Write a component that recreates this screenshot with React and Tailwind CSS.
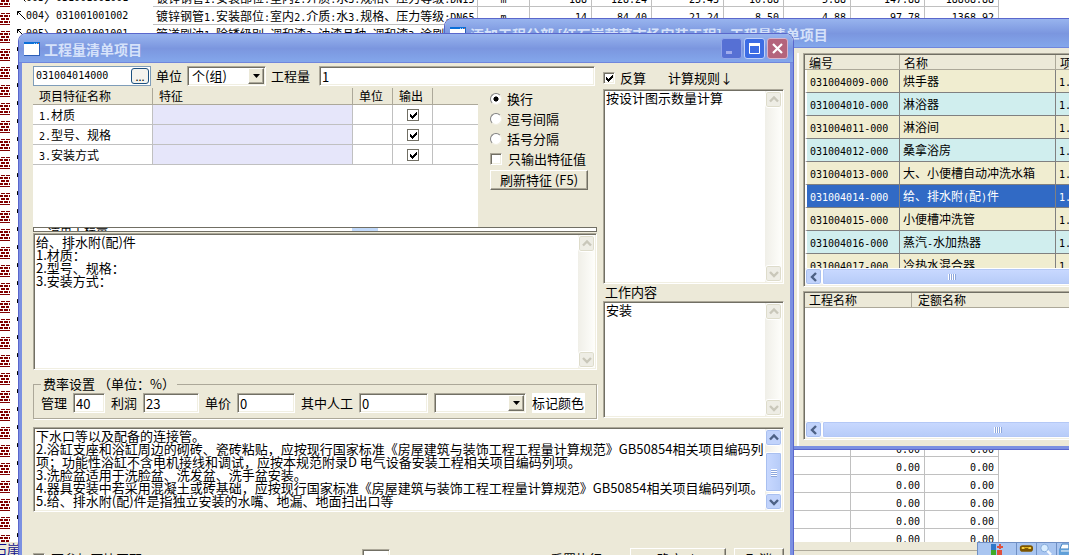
import React, { useState } from "react";

const sunken =
  "border border-t-[#aca899] border-l-[#aca899] border-r-white border-b-white bg-white shadow-[inset_1px_1px_0_#716f64,inset_-1px_-1px_0_#f1efe2]";
const raised =
  "border border-t-white border-l-white border-r-[#716f64] border-b-[#716f64] bg-[#ece9d8] shadow-[inset_-1px_-1px_0_#aca899]";
const titleBar =
  "flex h-[29px] shrink-0 items-center bg-linear-to-b from-[#98b4ee] via-[#7b96df] to-[#84a8ec] shadow-[inset_0_-1px_0_#7086dc]";

const billRows = [
  ["003", "031001001001", "镀锌钢管1.安装部位:室内2.介质:水3.规格、压力等级:DN15", "m", "188", "128.24", "25.43", "10.88", "5.88", "147.88", "18868.88"],
  ["004", "031001001002", "镀锌钢管1.安装部位:室内2.介质:水3.规格、压力等级:DN65", "m", "14", "84.40", "21.24", "8.50", "4.88", "97.78", "1368.92"],
  ["005", "031001001001", "管道刷油1.除锈级别:调和漆2.油漆品种:调和漆3.涂刷", "m", "0", "0.00", "0.00", "0.00", "0.00", "0.00", "0.00"],
];
const emptyRow = ["", "", "", "", "", "", "", "", "", "0.00", "0.00"];
const allRows = [...billRows, ...Array(28).fill(emptyRow)];

const features = ["1.材质", "2.型号、规格", "3.安装方式"];

const items = [
  ["031004009-000", "烘手器"],
  ["031004010-000", "淋浴器"],
  ["031004011-000", "淋浴间"],
  ["031004012-000", "桑拿浴房"],
  ["031004013-000", "大、小便槽自动冲洗水箱"],
  ["031004014-000", "给、排水附(配)件"],
  ["031004015-000", "小便槽冲洗管"],
  ["031004016-000", "蒸汽-水加热器"],
  ["031004017-000", "冷热水混合器"],
];

const notes = `下水口等以及配备的连接管。
2.浴缸支座和浴缸周边的砌砖、瓷砖粘贴，应按现行国家标准《房屋建筑与装饰工程工程量计算规范》GB50854相关项目编码列
项；功能性浴缸不含电机接线和调试，应按本规范附录D 电气设备安装工程相关项目编码列项。
3.洗脸盆适用于洗脸盆、洗发盆、洗手盆安装。
4.器具安装中若采用混凝土或砖基础，应按现行国家标准《房屋建筑与装饰工程工程量计算规范》GB50854相关项目编码列项。
5.给、排水附(配)件是指独立安装的水嘴、地漏、地面扫出口等`;

// Latin parts use a narrow monospace so that they keep half the width of a Chinese character
function Mixed({ text }) {
  return text.split(/([\x20-\x7e]+)/).map((part, i) =>
    i % 2 ? (
      <span key={i} className="font-['DejaVu_Sans_Mono',monospace] text-[10px] leading-none whitespace-pre">
        {part}
      </span>
    ) : (
      part
    )
  );
}

function BrickIcon() {
  return (
    <svg width="10" height="12" viewBox="0 0 10 12" shapeRendering="crispEdges" className="shrink-0">
      <path
        fill="#800000"
        d="M1 0h4v1H1zM6 0h4v1H6zM0 2h3v2H0zM4 2h4v2H4zM9 2h1v2H9zM1 5h4v2H1zM6 5h3v2H6zM0 8h3v2H0zM4 8h4v2H4zM9 8h1v2H9zM0 11h10v1H0z"
      />
    </svg>
  );
}

function WindowIcon() {
  return (
    <svg width="16" height="14" viewBox="0 0 16 14" shapeRendering="crispEdges" className="shrink-0">
      <rect width="16" height="14" fill="#2c5fb8" />
      <rect width="16" height="3" fill="#0a6fd8" />
      <rect y="2" width="15" height="11" fill="#fff" />
      <rect x="10" y="1" width="1" height="1" fill="#9fd0ff" />
      <rect x="12" y="1" width="1" height="1" fill="#9fd0ff" />
      <rect x="14" y="1" width="1" height="1" fill="#f06030" />
    </svg>
  );
}

function Chevron({ dir, color }) {
  const paths = {
    up: "M1 6.5 5 2.5 9 6.5",
    down: "M1 3 5 7 9 3",
    left: "M7 1 3 5 7 9",
  };
  return (
    <svg width="10" height="10" viewBox="0 0 10 10" fill="none" stroke={color} strokeWidth="2.4">
      <path d={paths[dir]} />
    </svg>
  );
}

function ScrollButton({ dir, disabled }) {
  return (
    <button
      type="button"
      aria-label={dir}
      disabled={disabled}
      className={
        disabled
          ? "flex size-[17px] shrink-0 items-center justify-center rounded-[3px] border border-white bg-[#eeede5] shadow-[inset_0_0_0_1px_#dedccb]"
          : "flex size-[17px] shrink-0 items-center justify-center rounded-[3px] border border-white bg-[#c1d3fb] shadow-[inset_0_0_0_1px_#a9c0f0]"
      }
    >
      <Chevron dir={dir} color={disabled ? "#c9c7ba" : "#4d6185"} />
    </button>
  );
}

function VScroll({ disabled = true, children }) {
  return (
    <div className="flex w-[17px] shrink-0 flex-col bg-linear-to-r from-[#f0efe8] to-[#fefefb]">
      <ScrollButton dir="up" disabled={disabled} />
      <div className="flex flex-1 flex-col justify-end">{children}</div>
      <ScrollButton dir="down" disabled={disabled} />
    </div>
  );
}

function HScroll({ thumb }) {
  return (
    <div className="flex h-[17px] shrink-0 bg-[#f5f4ee]">
      <ScrollButton dir="left" />
      <div
        className={`${thumb} flex shrink-0 items-center justify-center gap-px rounded-xs border border-white bg-linear-to-b from-[#c9d9ff] to-[#b6cbf8] shadow-[inset_0_0_0_1px_#b4c8f6]`}
      >
        {[0, 1, 2, 3].map((n) => (
          <span key={n} className="h-1.5 w-px bg-white shadow-[1px_0_0_#8ca6dc]" />
        ))}
      </div>
    </div>
  );
}

function TextPane({ label, value, className, children }) {
  return (
    <div className={`${sunken} ${className} flex p-px`}>
      <textarea
        aria-label={label}
        defaultValue={value}
        spellCheck="false"
        wrap="off"
        className="min-w-0 flex-1 resize-none overflow-hidden pl-px text-[13px] leading-[13px] whitespace-pre outline-none"
      />
      {children || <VScroll />}
    </div>
  );
}

function CheckBox({ id, checked, flat, label }) {
  const [on, setOn] = useState(checked);
  return (
    <span className="relative flex size-3 shrink-0">
      <input
        id={id}
        type="checkbox"
        aria-label={label}
        checked={on}
        onChange={() => setOn(!on)}
        className={flat ? "size-3 appearance-none border border-[#716f64] bg-white" : `${sunken} size-3 appearance-none`}
      />
      {on && (
        <svg viewBox="0 0 12 12" className="pointer-events-none absolute inset-0 size-3" shapeRendering="crispEdges">
          <path d="M3 5h1v1h1v1h1V6h1V5h1V4h1V3h1v3H9v1H8v1H7v1H6v1H5V9H4V8H3z" />
        </svg>
      )}
    </span>
  );
}

function Radio({ label, checked }) {
  return (
    <label className="flex items-center gap-[5px]">
      <input
        type="radio"
        name="separator"
        defaultChecked={checked}
        className="size-3 appearance-none rounded-full border border-t-[#808080] border-r-[#f1efe2] border-b-[#f1efe2] border-l-[#808080] bg-white checked:bg-radial checked:from-black checked:from-30% checked:to-white checked:to-40%"
      />
      {label}
    </label>
  );
}

function Select({ id, label, options, className }) {
  return (
    <span className={`relative flex h-5 ${className}`}>
      <select id={id} aria-label={label} className={`${sunken} w-full appearance-none pl-1 outline-none`}>
        {options.map((o) => (
          <option key={o}>{o}</option>
        ))}
      </select>
      <span className={`${raised} pointer-events-none absolute inset-y-0.5 right-0.5 flex w-4 items-center justify-center`}>
        <svg width="7" height="4" viewBox="0 0 7 4">
          <path d="M0 0h7L3.5 4z" />
        </svg>
      </span>
    </span>
  );
}

function RateField({ id, label, value, width }) {
  return (
    <>
      <label htmlFor={id} className="shrink-0">
        {label}
      </label>
      <input id={id} defaultValue={value} className={`${sunken} ${width} h-5 min-w-0 pl-0.5 outline-none`} />
    </>
  );
}

function BillSheet() {
  return (
    <div className="min-h-0 flex-1 overflow-hidden text-xs leading-[17px]">
      <table className="-mt-[11px] w-[999px] table-fixed border-separate border-spacing-0">
        <colgroup>
          <col className="w-[153px]" />
          <col className="w-[325px]" />
          <col className="w-[52px]" />
          <col className="w-[62px]" />
          <col className="w-[60px]" />
          <col className="w-[72px]" />
          <col className="w-[60px]" />
          <col className="w-[67px]" />
          <col className="w-[74px]" />
          <col className="w-[74px]" />
        </colgroup>
        <tbody>
          {allRows.map(([no, code, name, unit, ...nums], i) => (
            <tr key={i} className="h-[18px]">
              <td className="p-0">
                <div className="flex h-[18px] items-center">
                  <div className="self-end">
                    <BrickIcon />
                  </div>
                  <svg width="9" height="10" viewBox="0 0 9 10" className="ml-[7px]" fill="none" stroke="#000">
                    <path d="M.5 4V.5H4M.5.5l8 8" />
                  </svg>
                  {no && (
                    <span className="flex items-center whitespace-pre">
                      <Mixed text={no} />
                      <span className="w-3">〉</span>
                      <Mixed text={code} />
                    </span>
                  )}
                </div>
              </td>
              <td className="overflow-hidden border-r border-b border-[#c0c0c0] p-0 pl-[3px] whitespace-nowrap">
                <Mixed text={name} />
              </td>
              <td className="border-r border-b border-[#c0c0c0] p-0 text-center">
                <Mixed text={unit} />
              </td>
              {nums.map((n, j) => (
                <td key={j} className="border-r border-b border-[#c0c0c0] p-0 pr-1 text-right">
                  <Mixed text={n} />
                </td>
              ))}
            </tr>
          ))}
        </tbody>
      </table>
    </div>
  );
}

function StatusStrip() {
  return (
    <div className="flex h-[13px] shrink-0 overflow-hidden bg-[#ece9d8]">
      <span className="-ml-1.5 text-[13px] leading-[13px] text-[#10108c]">石崖</span>
      <div className="mt-2 flex-1 border-t border-[#aca899]" />
      <div className="flex w-[92px] items-start divide-x divide-[#6f8fc4] border-t border-l border-[#6f8fc4] bg-[#a9c5f0]">
        <svg width="39" height="12" viewBox="0 0 39 12" shapeRendering="crispEdges">
          <path fill="#2f78c8" d="M13 1h6v6h-6z" />
          <path fill="#3faa28" d="M13 7h6v5h-6z" />
          <path fill="#e0503c" d="M20 7h5v5h-5zM20 3h6v2h-6zM22 1h2v5h-2z" />
        </svg>
        <svg width="21" height="12" viewBox="0 0 21 12">
          <rect x="3" y="2" width="14" height="7" rx="3" fill="#7c5400" />
          <path d="M5 5h3M12 5h3" stroke="#f8d040" strokeWidth="2" />
          <path d="M8 4.500h4" stroke="#f0c020" />
        </svg>
        <svg width="20" height="12" viewBox="0 0 20 12">
          <circle cx="8" cy="5" r="4" fill="#d8ecff" stroke="#7fa6d8" />
          <path d="m11 8 4 4" stroke="#f4f8ff" strokeWidth="2.500" />
        </svg>
        <svg width="12" height="12" viewBox="0 0 12 12">
          <path d="M5 1h7v5H3z" fill="#fff" stroke="#3d7fc0" />
          <path d="M2 6h10v6H2z" fill="#5f9fd8" />
          <path d="M4 8h8" stroke="#fff" />
        </svg>
      </div>
    </div>
  );
}

function PickerWindow() {
  return (
    <section className="absolute top-[18px] -right-[140px] left-[444px] flex h-[432px] flex-col overflow-hidden rounded-t-lg border border-[#5a67cc] bg-[#ece9d8]">
      <header className={`${titleBar} gap-1 pl-[5px]`}>
        <WindowIcon />
        <h2 className="flex gap-2 text-sm font-bold text-[#d6e2fa]">
          <span>添加工程分部 [红石崖蔬菜市场安装工程]</span>
          <span>工程量清单项目</span>
        </h2>
      </header>
      <div className="flex min-h-0 flex-1 border-x-[3px] border-b-[3px] border-[#7b90e2] pt-[5px]">
        <div className="flex w-[351px] shrink-0 flex-col gap-6 border-r-2 border-white pr-1 pb-1">
          <div className="flex-1 border-2 border-[#aca899] bg-white" />
          <div className="h-5 border border-[#716f64] bg-white" />
        </div>
        <div className="ml-1 flex min-w-0 flex-1 flex-col gap-1 pb-1.5">
          <div className={`${sunken} flex h-[234px] flex-col p-px`}>
            <div className="min-h-0 flex-1 overflow-hidden text-xs">
              <table className="w-full table-fixed border-separate border-spacing-0">
                <colgroup>
                  <col className="w-[95px]" />
                  <col className="w-[156px]" />
                  <col />
                </colgroup>
                <thead>
                  <tr className="h-[15px] bg-[#ece9d8] text-left leading-[13px]">
                    {["编号", "名称", "项目特征"].map((h) => (
                      <th key={h} className="border-r border-b border-[#aca899] p-0 pl-1 font-normal">
                        {h}
                      </th>
                    ))}
                  </tr>
                </thead>
                <tbody>
                  {items.map(([code, name], i) => (
                    <tr
                      key={code}
                      className={
                        i === 5
                          ? "h-[23px] bg-[#316ac5] text-white"
                          : i % 2
                            ? "h-[23px] bg-[#d0eeee]"
                            : "h-[23px] bg-[#f0edd0]"
                      }
                    >
                      <td className="border-r border-b border-l-2 border-[#808080] border-l-white p-0 pl-[3px]">
                        <Mixed text={code} />
                      </td>
                      <td className="border-r border-b border-[#808080] p-0 pl-[3px] whitespace-nowrap">
                        <Mixed text={name} />
                      </td>
                      <td className="border-b border-[#808080] p-0 pl-[3px]">
                        <Mixed text="1." />
                      </td>
                    </tr>
                  ))}
                </tbody>
              </table>
            </div>
            <HScroll thumb="w-[258px]" />
          </div>
          <div className={`${sunken} flex min-h-0 flex-1 flex-col p-px`}>
            <div className="flex h-[15px] shrink-0 border-b border-[#aca899] bg-[#ece9d8] text-xs leading-[14px]">
              <span className="w-[107px] border-r border-[#aca899] pl-1">工程名称</span>
              <span className="pl-1.5">定额名称</span>
            </div>
            <div className="flex-1" />
            <HScroll thumb="w-[350px]" />
          </div>
        </div>
      </div>
    </section>
  );
}

function TitleButton({ label, color, children }) {
  return (
    <button
      type="button"
      aria-label={label}
      className={`${color} flex size-[21px] items-center justify-center rounded-[3px] border`}
    >
      <svg width="13" height="13" viewBox="0 0 13 13" fill="none" stroke="#fff">
        {children}
      </svg>
    </button>
  );
}

function FeatureGrid() {
  return (
    <div className="h-[139px] w-[445px] shrink-0 bg-white text-xs">
      <table className="w-full table-fixed border-separate border-spacing-0">
        <colgroup>
          <col className="w-[120px]" />
          <col className="w-[200px]" />
          <col className="w-10" />
          <col className="w-10" />
          <col />
        </colgroup>
        <thead>
          <tr className="h-[17px] bg-[#ece9d8] text-left leading-[16px]">
            {["项目特征名称", "特征", "单位", "输出"].map((h) => (
              <th key={h} className="border-r border-b border-[#aca899] p-0 pl-1.5 font-normal">
                {h}
              </th>
            ))}
            <th className="border-b border-[#aca899]" />
          </tr>
        </thead>
        <tbody>
          {features.map((f) => (
            <tr key={f} className="h-5">
              <td className="border-r border-b border-[#c0c0c0] p-0 pl-1.5">
                <Mixed text={f} />
              </td>
              <td className="border-r border-b border-[#c0c0c0] bg-[#e6e6fa]" />
              <td className="border-r border-b border-[#c0c0c0]" />
              <td className="border-r border-b border-[#c0c0c0] p-0">
                <div className="flex justify-center">
                  <CheckBox checked flat label={f} />
                </div>
              </td>
              <td className="border-b border-[#c0c0c0]" />
            </tr>
          ))}
        </tbody>
      </table>
    </div>
  );
}

function BillItemWindow() {
  return (
    <section className="absolute top-[33px] right-[275px] left-[18px] flex flex-col overflow-hidden rounded-t-lg border border-[#5a67cc] bg-[#ece9d8]">
      <header className={`${titleBar} gap-1 pr-[5px] pl-[5px]`}>
        <WindowIcon />
        <h1 className="flex-1 text-sm font-bold text-[#d6e2fa]">工程量清单项目</h1>
        <div className="flex gap-0.5">
          <TitleButton label="最小化" color="border-[#8fa4ea] bg-[#5670d4]">
            <path d="M1 10.500h6" stroke="#a0acec" strokeWidth="3" />
          </TitleButton>
          <TitleButton label="最大化" color="border-[#c0d0f8] bg-[#3c6ce4]">
            <path d="M1 2.500h11" strokeWidth="3" />
            <path d="M1.500 2.500h10v9h-10z" />
          </TitleButton>
          <TitleButton label="关闭" color="border-[#d8b4cc] bg-[#b4647c]">
            <path d="m2 2 9 9M11 2l-9 9" strokeWidth="2.200" />
          </TitleButton>
        </div>
      </header>

      <div className="border-x-[3px] border-[#7b90e2] pt-[3px] pr-1.5 pb-10 pl-[11px] text-[13px] leading-[14px]">
        <div className="flex gap-1.5">
          {/* Left side: code, features, description and rates */}
          <div className="min-w-0 flex-1">
            <div className="flex h-5 items-center gap-[5px]">
              <div className="flex h-5 w-[118px] items-center border border-[#7f9db9] bg-white pr-px">
                <input
                  aria-label="编号"
                  defaultValue="031004014000"
                  className="min-w-0 flex-1 pl-0.5 font-['DejaVu_Sans_Mono',monospace] text-[10px] outline-none"
                />
                <button
                  type="button"
                  className="h-4 w-[18px] rounded-[3px] border border-[#1c5180] bg-[#f4f3ee] text-[11px] leading-[12px]"
                >
                  ...
                </button>
              </div>
              <label htmlFor="unit" className="shrink-0">
                单位
              </label>
              <Select id="unit" options={["个(组)"]} className="w-[79px]" />
              <label htmlFor="quantity" className="shrink-0">
                工程量
              </label>
              <input
                id="quantity"
                defaultValue="1"
                className={`${sunken} mr-0.5 ml-1 h-5 min-w-0 flex-1 pl-0.5 outline-none`}
              />
            </div>

            <div className="mt-0.5 flex">
              <FeatureGrid />
              <div className="flex flex-col items-start gap-1.5 pt-1 pl-3">
                <Radio label="换行" checked />
                <Radio label="逗号间隔" />
                <Radio label="括号分隔" />
                <label htmlFor="only-values" className="flex items-center gap-1.5">
                  <CheckBox id="only-values" />
                  只输出特征值
                </label>
                <button type="button" className={`${raised} -mt-0.5 h-5 w-[98px] whitespace-nowrap`}>
                  刷新特征 (F5)
                </button>
              </div>
            </div>

            <div className="flex h-[5px] overflow-hidden border border-[#716f64] bg-white">
              <span className="ml-3.5 w-[78px] text-xs leading-[4px] whitespace-nowrap">清单工程量</span>
              <span className="ml-[226px] w-[26px] bg-[#c1d9fa]" />
            </div>

            <TextPane
              label="项目描述"
              className="mt-px h-[137px]"
              value={"给、排水附(配)件\n1.材质：\n2.型号、规格：\n3.安装方式："}
            />

            <fieldset className="mt-[7px] border border-[#aca899] pr-1 pb-[5px] pl-[7px] shadow-[1px_1px_0_#fff]">
              <legend className="px-0.5 whitespace-pre">费率设置 （单位：%）</legend>
              <div className="flex h-[22px] items-center gap-1.5 pt-0.5">
                <RateField id="manage" label="管理" value="40" width="w-8" />
                <RateField id="profit" label="利润" value="23" width="w-14" />
                <RateField id="price" label="单价" value="0" width="w-[58px]" />
                <RateField id="labour" label="其中人工" value="0" width="w-[69px]" />
                <Select label="标记" options={[""]} className="w-[92px] shrink-0" />
                <span className="h-5 w-[53px] shrink-0 bg-white leading-5">标记颜色</span>
              </div>
            </fieldset>
          </div>

          {/* Right side: calculation rule and work content */}
          <div className="w-[181px] shrink-0">
            <div className="flex h-[23px] items-center">
              <label htmlFor="reverse" className="flex items-center gap-[5px]">
                <CheckBox id="reverse" checked />
                反算
              </label>
              <span className="ml-[22px]">计算规则↓</span>
            </div>
            <TextPane label="计算规则" value="按设计图示数量计算" className="h-[195px]" />
            <p className="h-[17px] pl-0.5 leading-[15px]">工作内容</p>
            <TextPane label="工作内容" value="安装" className="h-[117px]" />
          </div>
        </div>

        <TextPane label="说明" value={notes} className="mt-2 h-[85px]">
          <VScroll disabled={false}>
            <div className="mb-px flex h-10 flex-col items-center justify-center gap-px rounded-xs border border-white bg-linear-to-r from-[#c9d9ff] to-[#b6cbf8] shadow-[inset_0_0_0_1px_#a9c0f0]">
              {[0, 1, 2, 3].map((n) => (
                <span key={n} className="h-px w-1.5 bg-white shadow-[0_1px_0_#8ca6dc]" />
              ))}
            </div>
          </VScroll>
        </TextPane>

        <div className="mt-9 flex items-center">
          <label htmlFor="skip" className="flex items-center gap-1.5">
            <CheckBox id="skip" />
            不参加压块匹配
          </label>
          <input aria-label="次数" defaultValue="0" className={`${sunken} ml-[220px] h-5 w-7 pl-0.5 outline-none`} />
          <span className="ml-auto">后置执行</span>
          <button type="button" className={`${raised} ml-7 h-[22px] w-24`}>
            确定 ↓
          </button>
          <button type="button" className={`${raised} ml-2 h-[22px] w-[50px]`}>
            取消
          </button>
        </div>
      </div>
    </section>
  );
}

function App() {
  return (
    <main className="relative flex h-screen w-full flex-col overflow-hidden bg-white font-['Noto_Sans_CJK_SC',sans-serif] text-black">
      <BillSheet />
      <StatusStrip />
      <PickerWindow />
      <BillItemWindow />
    </main>
  );
}

export default App;
